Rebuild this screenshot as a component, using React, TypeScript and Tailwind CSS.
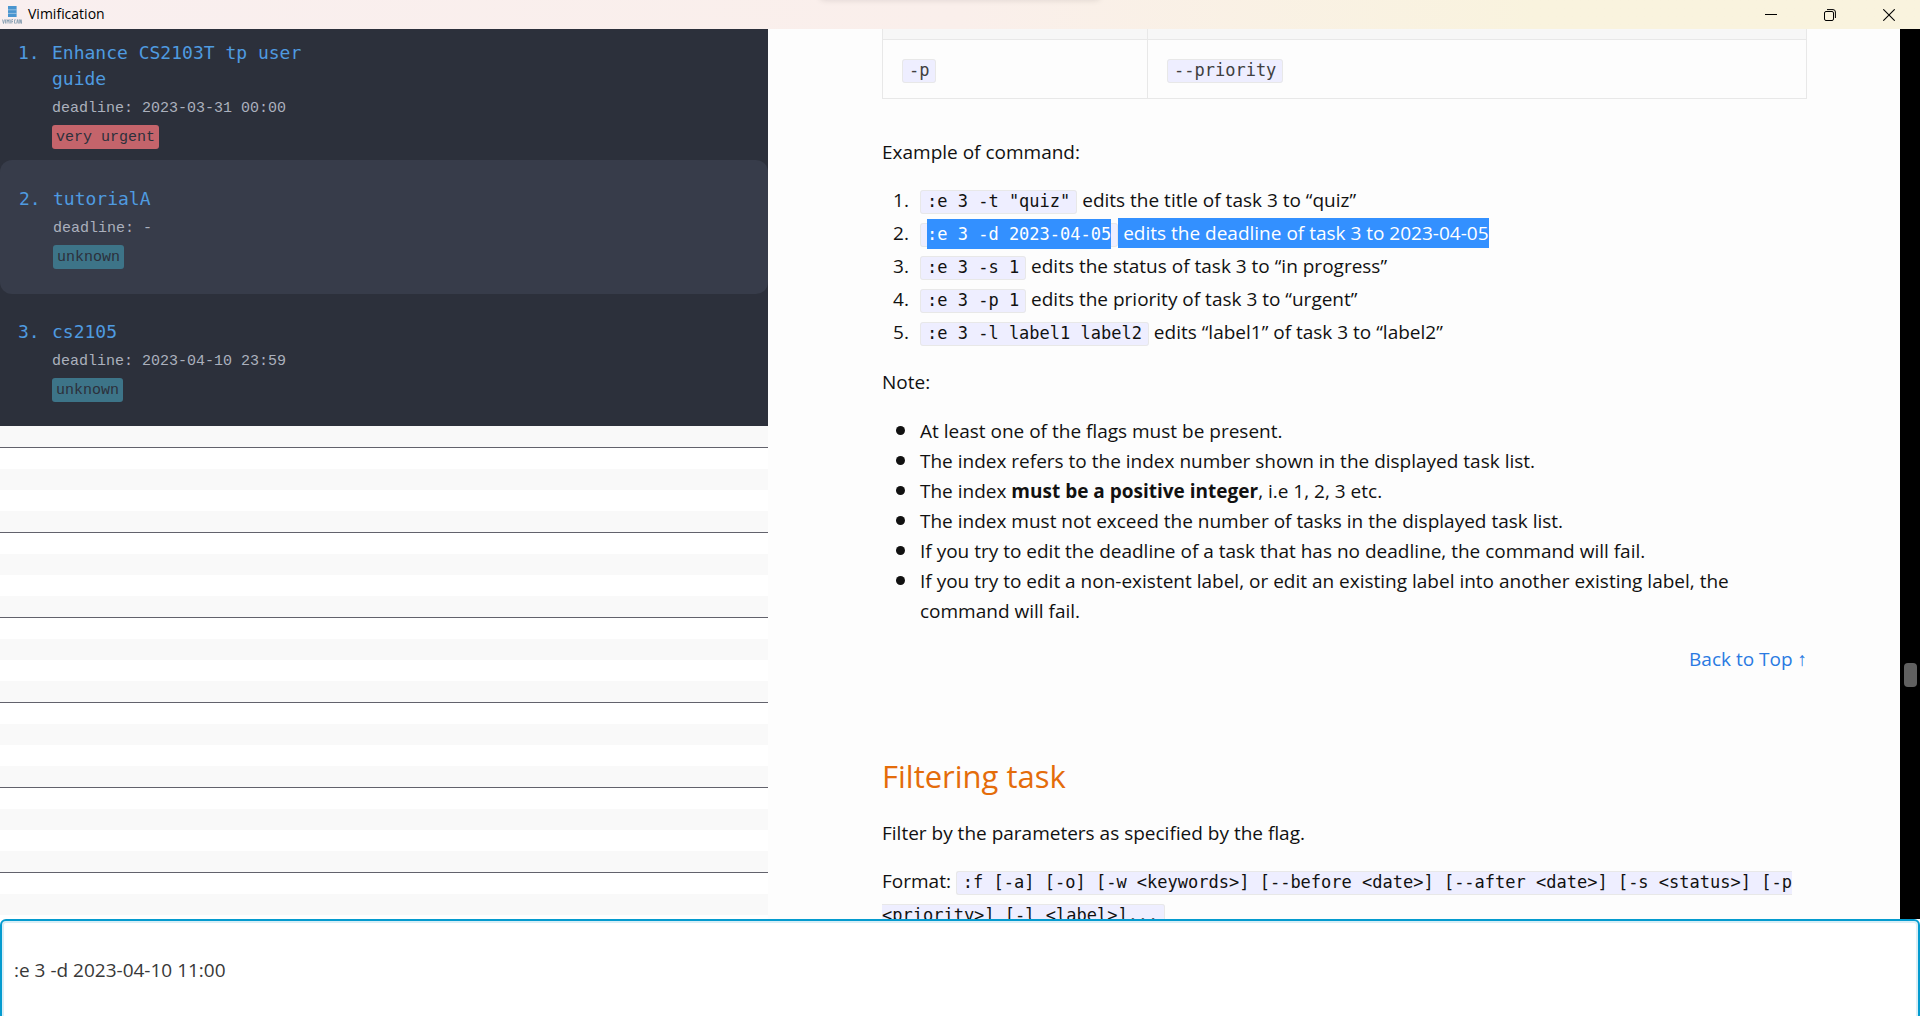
import React from "react";

type Task = {
  title: string;
  deadline: string;
  priority: string;
  chip: string;
  row: string;
};

const tasks: Task[] = [
  {
    title: "Enhance CS2103T tp user guide",
    deadline: "2023-03-31 00:00",
    priority: "very urgent",
    chip: "bg-[#c4646b]",
    row: "pt-[11px] pb-[11px] pl-[18px]",
  },
  {
    title: "tutorialA",
    deadline: "-",
    priority: "unknown",
    chip: "bg-[#3d7488]",
    row: "rounded-xl bg-[#373c4a] pt-[26px] pb-[25px] pl-[19px]",
  },
  {
    title: "cs2105",
    deadline: "2023-04-10 23:59",
    priority: "unknown",
    chip: "bg-[#3d7488]",
    row: "pt-[25px] pb-[24px] pl-[18px]",
  },
];

const notes: React.ReactNode[] = [
  "At least one of the flags must be present.",
  "The index refers to the index number shown in the displayed task list.",
  <>
    The index <strong className="font-bold">must be a positive integer</strong>, i.e 1, 2, 3 etc.
  </>,
  "The index must not exceed the number of tasks in the displayed task list.",
  "If you try to edit the deadline of a task that has no deadline, the command will fail.",
  "If you try to edit a non-existent label, or edit an existing label into another existing label, the command will fail.",
];

function Code({ children }: { children: React.ReactNode }) {
  return (
    <code className="rounded-[3px] border border-[#e8e8e8] bg-[#eeeeff] px-1.5 pb-0.5 font-['DejaVu_Sans_Mono',monospace] text-[17px] leading-5">
      {children}
    </code>
  );
}

const examples: React.ReactNode[] = [
  <>
    <Code>:e 3 -t "quiz"</Code> edits the title of task 3 to “quiz”
  </>,
  <>
    <Code>
      <span className="bg-[#3390ff] py-[5px] text-white">:e 3 -d 2023-04-05</span>
    </Code>
    <span className="bg-[#3390ff] py-0.5 text-white"> edits the deadline of task 3 to 2023-04-05</span>
  </>,
  <>
    <Code>:e 3 -s 1</Code> edits the status of task 3 to “in progress”
  </>,
  <>
    <Code>:e 3 -p 1</Code> edits the priority of task 3 to “urgent”
  </>,
  <>
    <Code>:e 3 -l label1 label2</Code> edits “label1” of task 3 to “label2”
  </>,
];

function AppLogo() {
  return (
    <svg viewBox="0 0 20 18" className="h-[18px] w-5" aria-hidden="true">
      <rect x="6" y="0" width="8.6" height="11" fill="#4a95cf" />
      <path d="M6 3.8h9M6 7.4h9" stroke="#a9cbe6" strokeWidth="0.8" />
      <path
        d="M0.5 13.5l1 4 1-4M3.5 13.5v4M5 17.5v-4l1 2 1-2v4M8.3 13.5v4M11 13.5H9.8v4M9.8 15.5H11M13.8 13.8h-1.3v3.4h1.3M14.6 17.5l.8-4 .8 4M17 13.5v4M18 17.5v-4l1.4 4v-4"
        fill="none"
        stroke="#6f8da3"
        strokeWidth="0.7"
      />
    </svg>
  );
}

function TitleBar() {
  const button = "flex h-full w-[59px] items-center justify-center";
  return (
    <header className="relative flex h-[29px] shrink-0 items-center overflow-hidden bg-linear-to-r from-[#f9efef] via-[#faefeb] via-50% to-[#f9f3de] to-80% pr-0.5 pl-0.5">
      <span className="absolute -top-2 left-1/2 h-2 w-[280px] -translate-x-1/2 rounded-full shadow-[0_0_6px_rgba(0,0,0,0.12)]" />
      <AppLogo />
      <h1 className="ml-1.5 flex-1 pb-px text-sm text-black">Vimification</h1>
      <button type="button" aria-label="Minimize" className={button}>
        <svg viewBox="0 0 12 12" className="size-3">
          <path d="M0 5.5h12" stroke="#000" />
        </svg>
      </button>
      <button type="button" aria-label="Restore" className={button}>
        <svg viewBox="0 0 12 12" className="size-3" fill="none" stroke="#000">
          <rect x="0.5" y="2.5" width="9" height="9" rx="1.5" />
          <path d="M3 0.6h6a2.4 2.4 0 0 1 2.4 2.4v6" />
        </svg>
      </button>
      <button type="button" aria-label="Close" className={button}>
        <svg viewBox="0 0 12 12" className="size-3">
          <path d="M0.3 0.3l11.4 11.4M11.7 0.3L0.3 11.7" stroke="#000" strokeWidth="1.1" />
        </svg>
      </button>
    </header>
  );
}

function TaskList() {
  return (
    <aside className="w-2/5 overflow-hidden bg-white">
      <ol className="bg-[#2c303b]">
        {tasks.map((t, i) => (
          <li key={t.title} className={`flex ${t.row}`}>
            <span className="w-[34px] shrink-0 font-['DejaVu_Sans_Mono',monospace] text-lg leading-[26px] text-[#4f9be0]">
              {i + 1}.
            </span>
            <div className="w-[270px]">
              <h2 className="font-['DejaVu_Sans_Mono',monospace] text-lg leading-[26px] text-[#4f9be0]">{t.title}</h2>
              <p className="mt-[7px] mb-1.5 font-['Liberation_Mono',monospace] text-[15px] leading-5 text-[#abb0bd]">
                deadline: {t.deadline}
              </p>
              <span
                className={`block w-fit rounded-[3px] px-1 pt-0.5 font-['Liberation_Mono',monospace] text-[15px] leading-[22px] text-[#2c303b] ${t.chip}`}
              >
                {t.priority}
              </span>
            </div>
          </li>
        ))}
      </ol>
      <div aria-hidden="true">
        <div className="h-[22px] border-b border-[#62626c] bg-[#f9f9f9]" />
        {[0, 1, 2, 3, 4, 5].map((n) => (
          <div key={n} className="border-b border-[#62626c]">
            <div className="h-[21px] bg-white" />
            <div className="h-[21px] bg-[#f9f9f9]" />
            <div className="h-[21px] bg-white" />
            <div className="h-[21px] bg-[#f9f9f9]" />
          </div>
        ))}
      </div>
    </aside>
  );
}

function Guide() {
  return (
    <section className="min-w-0 flex-1 overflow-hidden bg-[#fdfdfd] pr-[93px] pl-[114px] text-[19px] leading-[30px] text-[#111]">
      <table className="w-full border-collapse text-left text-[#404040]">
        <thead>
          <tr className="h-[10px] bg-[#f7f7f7]">
            <td className="w-[265px] border-x border-b border-[#e8e8e8]" />
            <td className="border-x border-b border-[#e8e8e8]" />
          </tr>
        </thead>
        <tbody>
          <tr className="h-[59px]">
            <td className="border border-[#e8e8e8] px-[19px]">
              <Code>-p</Code>
            </td>
            <td className="border border-[#e8e8e8] px-[19px]">
              <Code>--priority</Code>
            </td>
          </tr>
        </tbody>
      </table>
      <p className="mt-[38px]">Example of command:</p>
      <ol className="mt-[17px] leading-[33px]">
        {examples.map((e, i) => (
          <li key={i} className="flex">
            <span className="w-[38px] shrink-0 pl-[11px]">{i + 1}.</span>
            <div>{e}</div>
          </li>
        ))}
      </ol>
      <p className="mt-[18px]">Note:</p>
      <ul className="mt-[19px]">
        {notes.map((n, i) => (
          <li key={i} className="flex">
            <span className="mt-[10px] mr-[15px] ml-[14px] size-[9px] shrink-0 rounded-full bg-[#111]" />
            <div>{n}</div>
          </li>
        ))}
      </ul>
      <p className="mt-[18px] text-right">
        <a href="#top" className="text-[#2a7ae2]">
          Back to Top ↑
        </a>
      </p>
      <h2 className="mt-[82px] text-[31px] leading-10 text-[#e46c0a]">Filtering task</h2>
      <p className="mt-[22px]">Filter by the parameters as specified by the flag.</p>
      <p className="mt-[17px] leading-[33px]">
        Format:{" "}
        <Code>
          {":f [-a] [-o] [-w <keywords>] [--before <date>] [--after <date>] [-s <status>] [-p <priority>] [-l <label>]..."}
        </Code>
      </p>
    </section>
  );
}

export default function App() {
  return (
    <div className="flex h-screen flex-col overflow-hidden bg-white font-['Open_Sans',sans-serif]">
      <TitleBar />
      <main className="flex min-h-0 flex-1">
        <TaskList />
        <Guide />
        <div className="flex w-5 flex-col items-center bg-black">
          <div className="grow-635" />
          <div className="h-6 w-[13px] rounded bg-[#606060]" />
          <div className="grow-232" />
        </div>
      </main>
      <footer className="h-[97px] shrink-0 overflow-hidden">
        <input
          type="text"
          aria-label="Command"
          defaultValue=":e 3 -d 2023-04-10 11:00"
          className="h-[102px] w-full rounded-md border-2 border-[#049bcf] bg-white px-3 text-[19px] text-[#383838] shadow-[inset_0_0_0_2px_#d9eef6] outline-none"
        />
      </footer>
    </div>
  );
}
